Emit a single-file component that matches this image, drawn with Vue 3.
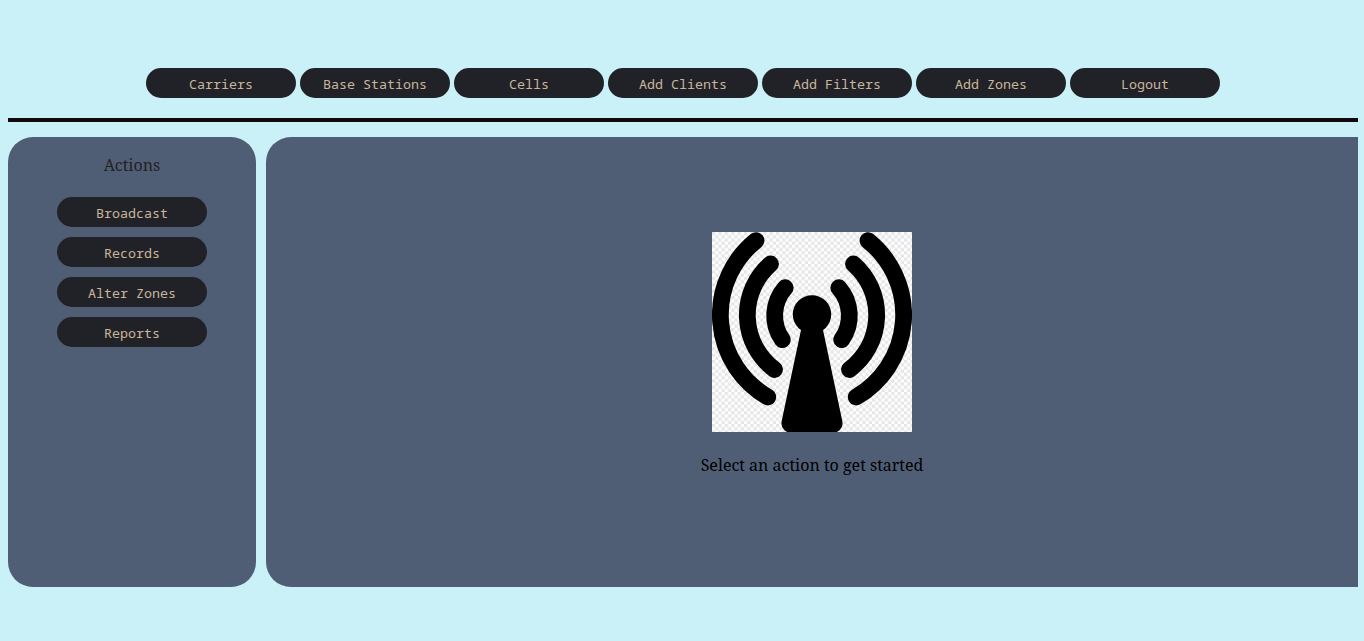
<script setup>
const sections = ['Carriers', 'Base Stations', 'Cells', 'Add Clients', 'Add Filters', 'Add Zones', 'Logout']
const actions = ['Broadcast', 'Records', 'Alter Zones', 'Reports']
</script>

<template>
  <div class="page">
    <nav class="topbar" aria-label="Sections">
      <button v-for="name in sections" :key="name" type="button" class="pill">{{ name }}</button>
    </nav>
    <hr class="divider" />
    <div class="columns">
      <aside class="sidebar">
        <p class="heading">Actions</p>
        <button v-for="name in actions" :key="name" type="button" class="pill">{{ name }}</button>
      </aside>
      <main class="content">
        <svg class="antenna" viewBox="0 0 200 200" role="img" aria-label="Antenna">
          <defs>
            <pattern id="checks" width="6.4" height="6.4" patternUnits="userSpaceOnUse">
              <rect width="6.4" height="6.4" fill="#fefefe" />
              <rect width="3.2" height="3.2" fill="#e6e6e6" />
              <rect x="3.2" y="3.2" width="3.2" height="3.2" fill="#e6e6e6" />
            </pattern>
            <g id="waves" fill="none" stroke="#000" stroke-width="16.8" stroke-linecap="round">
              <path d="M44 8.6A95 95 0 0 0 55.8 165" />
              <path d="M58.5 32A68 68 0 0 0 62.5 137.5" />
              <path d="M73.2 55.7A42 42 0 0 0 70.3 107.7" />
            </g>
          </defs>
          <rect width="200" height="200" fill="url(#checks)" />
          <use href="#waves" />
          <use href="#waves" transform="matrix(-1 0 0 1 200 0)" />
          <circle cx="100" cy="82.4" r="19.2" />
          <path d="M89 98H111L130.3 189Q132 196 125 200H75Q68 196 69.7 189Z" />
        </svg>
        <p class="hint">Select an action to get started</p>
      </main>
    </div>
  </div>
</template>

<style>
body {
  background: #caf0f8;
}
</style>

<style scoped>
.page {
  padding: 68px 6px 54px 8px;
  font-family: "Noto Serif", serif;
  font-size: 16px;
  line-height: 22px;
}
.topbar {
  display: flex;
  justify-content: center;
  gap: 4px;
}
.pill {
  width: 150px;
  height: 30px;
  padding: 2px 0 0;
  border: none;
  border-radius: 15px;
  background: #212227;
  color: #c9b69c;
  font-family: "Noto Sans Mono", "DejaVu Sans Mono", monospace;
  line-height: 18px;
  cursor: pointer;
}
.divider {
  height: 4px;
  margin: 20px 0 15px;
  border: none;
  background: #140a0c;
}
.columns {
  display: flex;
  gap: 10px;
  min-height: 450px;
}
.sidebar {
  display: flex;
  flex: 0 0 248px;
  flex-direction: column;
  align-items: center;
  gap: 10px;
  box-sizing: border-box;
  padding: 17px 0;
  border-radius: 25px;
  background: #505e75;
}
.heading {
  margin: 0 0 11px;
  color: #212227;
}
.content {
  display: flex;
  flex: 1;
  flex-direction: column;
  align-items: center;
  justify-content: center;
  border-radius: 25px 0 0 25px;
  background: #505e75;
}
.antenna {
  display: block;
  width: 200px;
  height: 200px;
}
.hint {
  margin: 22px 0 16px;
  color: #000;
}
</style>
